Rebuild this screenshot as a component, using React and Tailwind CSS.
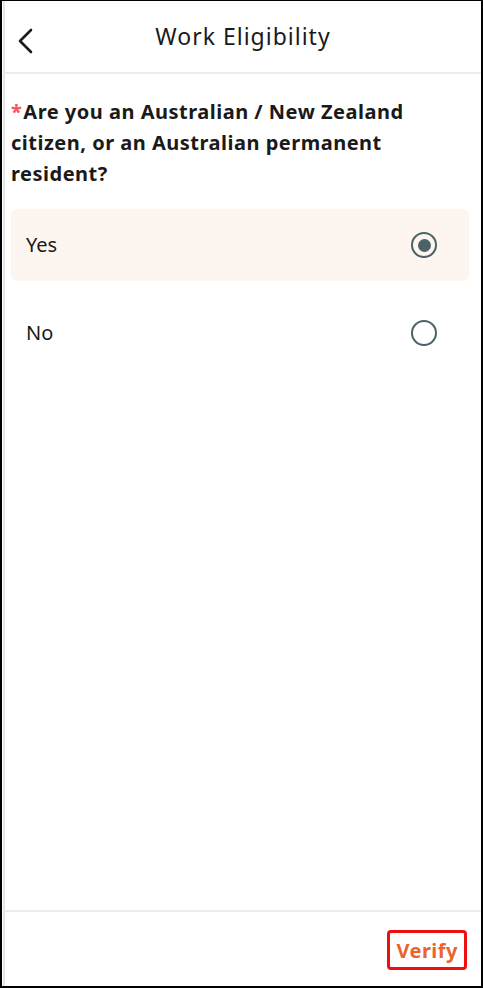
import { useState } from "react";

const options = ["Yes", "No"];

function Radio({ checked }) {
  return (
    <span className="flex h-[26px] w-[26px] items-center justify-center rounded-full border-[2.5px] border-[#4b6367]">
      {checked && <span className="h-[13px] w-[13px] rounded-full bg-[#4b6367]" />}
    </span>
  );
}

export default function App() {
  const [answer, setAnswer] = useState("Yes");

  return (
    <div className="h-[988px] w-[483px] border-t border-l-2 border-r-2 border-b-2 border-black bg-white font-['Noto_Sans',sans-serif] text-[#1a1a1a]">
      <div className="ml-px flex h-full flex-col border-l-2 border-[#e6e6e6]">
        <header className="relative flex h-[73px] items-center justify-center border-b-2 border-[#ececec]">
          <button className="absolute left-[8px] top-[23px] p-1">
            <svg width="18" height="26" viewBox="0 0 18 26" fill="none">
              <path d="M14 2L3 13l11 11" stroke="#1a1a1a" strokeWidth="2.6" strokeLinecap="round" strokeLinejoin="round" />
            </svg>
          </button>
          <h1 className="text-[23px] font-normal tracking-[1px]">Work Eligibility</h1>
        </header>

        <main className="flex-1 pl-[6px] pr-[12px] pt-[22px]">
          <p className="text-[20px] font-bold leading-[31px] tracking-[0.5px]">
            <span className="mr-[1px] text-[#f25a5a]">*</span>Are you an Australian / New Zealand citizen, or an Australian permanent resident?
          </p>

          <div className="mt-[20px] flex flex-col gap-[16px]">
            {options.map((opt) => (
              <button
                key={opt}
                onClick={() => setAnswer(opt)}
                className={`flex h-[72px] items-center justify-between rounded-md pl-[15px] pr-[32px] text-left ${
                  answer === opt ? "bg-[#fdf5f0]" : "bg-white"
                }`}
              >
                <span className="text-[20px]">{opt}</span>
                <Radio checked={answer === opt} />
              </button>
            ))}
          </div>
        </main>

        <footer className="flex h-[76px] items-start justify-end border-t-2 border-[#ececec] pr-[14px] pt-[18px]">
          <button className="rounded-[4px] border-[3px] border-[#ee0f0f] px-[6px] pb-[1px] pt-[3px] text-[20px] font-bold tracking-[0.5px] text-[#e9642f]">
            Verify
          </button>
        </footer>
      </div>
    </div>
  );
}
